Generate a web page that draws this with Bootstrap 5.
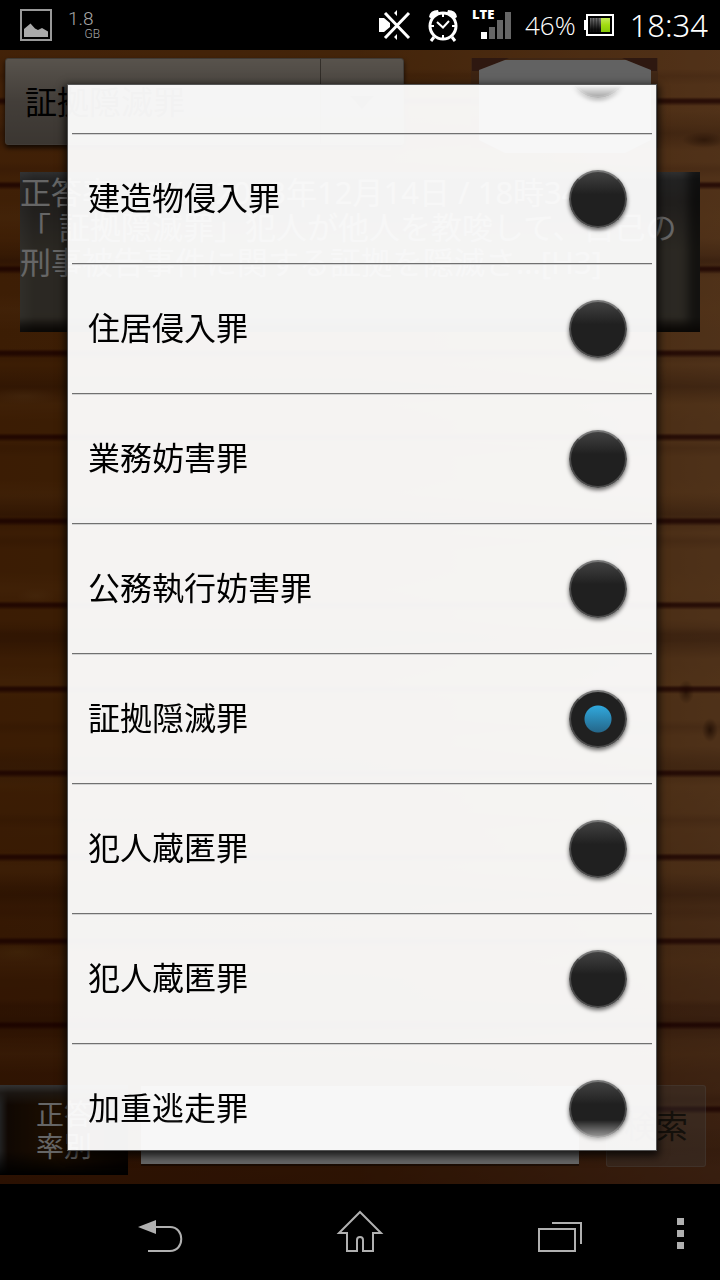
<!DOCTYPE html>
<html lang="ja">
<head>
<meta charset="utf-8">
<meta name="viewport" content="width=device-width, initial-scale=1">
<title>証拠隠滅罪</title>
<link href="https://cdn.jsdelivr.net/npm/bootstrap@5.3.0/dist/css/bootstrap.min.css" rel="stylesheet">
<style>
  body { background: #000; font-family: "Noto Sans", "Noto Sans CJK JP", sans-serif; }
  .status-bar { height: 50px; padding-right: 12px; color: #fff; font-family: "Open Sans", "Noto Sans", sans-serif; font-weight: 300; }
  .storage { width: 32px; color: #a8a8a8; font-family: Roboto, sans-serif; }
  .storage-size { font-size: 19px; line-height: 18px; }
  .storage-unit { font-size: 12px; line-height: 12px; }
  .signal { margin-left: 12px; }
  .battery-level { font-size: 26px; line-height: 32px; }
  .clock { font-size: 31px; line-height: 32px; font-family: "Noto Sans", sans-serif; }

  /* Wooden planks: grooves, knots, grain, base tone */
  .wood {
    background:
      repeating-linear-gradient(180deg, transparent 0 47px, rgba(60,0,0,.7) 50px 52px, transparent 56px 84px),
      radial-gradient(ellipse 34px 8px at 24px 346px, rgba(210,140,70,.25), transparent),
      radial-gradient(ellipse 20px 8px at 36px 546px, rgba(210,140,70,.2), transparent),
      radial-gradient(ellipse 36px 10px at 18px 902px, rgba(190,130,40,.3), transparent),
      radial-gradient(ellipse 8px 12px at calc(100% - 34px) 642px, rgba(60,20,0,.6), transparent),
      radial-gradient(ellipse 8px 12px at calc(100% - 10px) 680px, rgba(60,20,0,.7), transparent),
      radial-gradient(ellipse 22px 8px at calc(100% - 16px) 90px, rgba(60,20,0,.5), transparent),
      repeating-linear-gradient(180deg, transparent 0 19px, rgba(60,10,0,.12) 26px, transparent 35px 57px, rgba(220,140,60,.14) 74px, transparent 93px),
      repeating-linear-gradient(180deg, transparent 0 61px, rgba(50,10,0,.25) 83px, transparent 101px 127px),
      linear-gradient(180deg, rgba(230,130,60,.22), transparent 30% 65%, rgba(50,0,0,.4)),
      linear-gradient(90deg, #94480a, #98500f 50%, #c47c40);
  }
  .spinner-box { flex: 0 1 399px; height: 87px; margin-left: 5px; }
  .spinner-box select {
    appearance: none; height: 87px; padding: 0 19px; border: 1px solid #a09488; border-radius: 3px; color: #000;
    font-size: 32px; box-shadow: 0 3px 5px rgba(0,0,0,.7);
    background: linear-gradient(90deg, transparent 314px, rgba(70,60,50,.6) 314px 315px, transparent 315px), linear-gradient(#dccfbf, #a89c90 50%, #94887c);
  }
  .caret { right: 30px; top: 38px; width: 24px; height: 14px; }
  .question {
    height: 160px; margin: 17px 20px 0; padding-top: 3px; color: #fff; font-size: 31px; line-height: 35px;
    background: linear-gradient(90deg, rgba(255,255,255,.1), transparent 14px), linear-gradient(#777 0, #555 8px, #504b47 30px, #6c6557 80px, #6c6557 145px, #35281c);
    box-shadow: inset -12px -8px 10px rgba(0,0,0,.55);
  }
  .bottom-bar { padding: 0 14px 9px 0; }
  .rate-btn {
    width: 128px; height: 90px; border: 0; color: #fff; font-size: 28px; line-height: 32px; padding: 0;
    background: linear-gradient(#808080 0, rgba(74,64,56,.8) 8px, transparent 20px 66px, #000), linear-gradient(90deg, #555 0, #281408 8px, #502800 50%, #1c0c00);
  }
  .search-box { height: 78px; margin: 1px 0 0 13px; border: 0; border-radius: 0; background: #fff; box-shadow: 0 2px 0 rgba(0,0,0,.4); }
  .search-btn { width: 100px; height: 82px; margin-left: 27px; border: 1px solid rgba(255,255,255,.16); border-radius: 3px; background: rgba(150,150,150,.32); color: #33291d; font-size: 32px; }

  .scrim { background: rgba(0,0,0,.6); padding: 34px 63px 33px 67px; }
  .picker { background: rgba(255,255,255,.95); border: 1px solid #555; box-shadow: 0 3px 8px 2px rgba(0,0,0,.75); padding: 0 4px; }
  .picker-list { height: 0; mask-image: linear-gradient(transparent, #000 32px, #000 calc(100% - 30px), transparent); -webkit-mask-image: linear-gradient(transparent, #000 32px, #000 calc(100% - 30px), transparent); }
  /* list rests partly scrolled */
  .picker-rows { margin-top: -81px; }
  .picker-row { height: 130px; flex: none; padding: 0 25px 0 16px; color: #000; font-size: 32px; line-height: 40px; border-bottom: 1px solid #707070; box-shadow: 0 1px 0 #d2d2d2; }
  .picker-row span { padding-bottom: 1px; }
  .picker-row .form-check-input {
    width: 58px; height: 58px; margin: 0; float: none; flex: none; border: 2px solid #4c4c4c;
    border-top-color: #777;
    background: linear-gradient(#454545, #202020 42%, #202020); background-origin: border-box;
    box-shadow: 0 2px 4px rgba(0,0,0,.6);
  }
  .picker-row .form-check-input:checked {
    background: radial-gradient(circle at 50% 50%, transparent 13px, #202020 14px), linear-gradient(#30a8dc 16px, #25678a 42px);
    background-origin: border-box;
  }
  .nav-keys { height: 96px; }
  .nav-keys button { border: 0; background: none; padding: 0; line-height: 0; }
  .nav-side { padding: 0 16px 0 128px; }
</style>
</head>
<body class="d-flex flex-column min-vh-100">

<header class="status-bar d-flex align-items-center ps-3">
  <svg class="ms-1" width="32" height="32" viewBox="0 0 32 32"><rect x="1" y="1" width="30" height="30" fill="none" stroke="#999" stroke-width="2"/><path d="M4 28V20L10.500 14.500 15 19.500 18 21 22 19 28 22.500V28Z" fill="#aaa"/></svg>
  <div class="storage ms-3 d-flex flex-column">
    <span class="storage-size">1.8</span>
    <span class="storage-unit text-end">GB</span>
  </div>
  <div class="ms-auto d-flex align-items-center">
    <svg width="32" height="32" viewBox="0 0 32 32"><path d="M0 9H5L11 14V18L5 23H0Z M15 4 18 1V7Z M15 28 18 31V25Z" fill="#fff"/><path d="M6 4 30 29M30 4 6 29" stroke="#fff" stroke-width="3" fill="none"/></svg>
    <svg class="ms-3" width="32" height="34" viewBox="0 0 32 34"><circle cx="16" cy="18" r="13" fill="none" stroke="#fff" stroke-width="3"/><path d="M16 6V9M16 27V30M4 18H7M25 18H28M10 14 16 19.500 22 13" stroke="#fff" stroke-width="2" fill="none"/><path d="M2 9Q3 2 11 2L12 5 5 11ZM30 9Q29 2 21 2L20 5 27 11Z" fill="#fff"/><path d="M7 29 4 33M25 29 28 33" stroke="#fff" stroke-width="3"/></svg>
    <svg class="signal" width="42" height="42" viewBox="0 0 42 42"><text x="1" y="15" font-family="Open Sans, sans-serif" font-size="13" font-weight="800" fill="#fff">LTE</text><rect x="10" y="28" width="6" height="7" fill="#fff"/><path d="M18 23H24V35H18ZM26 16H32V35H26ZM34 8H40V35H34Z" fill="#666"/></svg>
    <span class="battery-level ms-2 ps-1">46%</span>
    <svg class="ms-2" width="30" height="22" viewBox="0 0 30 22"><defs><linearGradient id="cell" x2="0" y2="1"><stop stop-color="#c4ea58"/><stop offset=".5" stop-color="#a2dc10"/><stop offset="1" stop-color="#86c808"/></linearGradient><linearGradient id="used" x2="0" y2="1"><stop stop-color="#777"/><stop offset=".8" stop-color="#111"/></linearGradient></defs><rect x="3" y="1" width="26" height="20" fill="none" stroke="#fff" stroke-width="2"/><rect y="6" width="3" height="10" fill="#fff"/><rect x="6" y="4" width="11" height="14" fill="url(#used)"/><rect x="17" y="4" width="9" height="14" fill="url(#cell)"/><path d="M8 4V18M11 4V18M14 4V18" stroke="#000" opacity=".6"/></svg>
    <span class="clock ms-3">18:34</span>
  </div>
</header>

<main class="wood flex-grow-1 d-flex flex-column position-relative">
  <div class="d-flex align-items-start pt-2">
    <div class="spinner-box position-relative">
      <select class="w-100" aria-label="罪名"><option>証拠隠滅罪</option></select>
      <svg class="caret position-absolute" viewBox="0 0 24 14"><path d="M0 0H24L12 13Z" fill="#555"/></svg>
    </div>
    <svg class="ms-auto me-5" width="201" height="97" viewBox="0 0 201 97"><rect width="187" height="90" fill="#8a5838" opacity=".55"/><path d="M1 0H38L8 13H1ZM186 0H151L180 13H186Z" fill="#743c28"/><path d="M8 12 34 2H155L180 12V82L154 95H34L8 82Z" fill="#f4f4f4"/></svg>
  </div>
  <div class="question text-nowrap">正答率：0% / 2013年12月14日 / 18時34分<br>「 証拠隠滅罪」犯人が他人を教唆して、自己の<br>刑事被告事件に関する証拠を隠滅さ...[H3]</div>
  <div class="bottom-bar d-flex align-items-start mt-auto">
    <button class="rate-btn flex-shrink-0" type="button">正答<br>率別</button>
    <input class="search-box flex-grow-1" type="text" aria-label="検索語">
    <button class="search-btn flex-shrink-0 p-0" type="button">検索</button>
  </div>

  <div class="scrim position-absolute top-0 start-0 w-100 h-100 d-flex">
    <div class="picker flex-grow-1 d-flex flex-column" role="dialog" aria-label="罪名">
      <div class="picker-list flex-grow-1 overflow-hidden">
        <div class="picker-rows d-flex flex-column">
          <label class="picker-row d-flex align-items-center justify-content-end"><input class="form-check-input" type="radio" name="crime" aria-label="罪名"></label>
          <label class="picker-row d-flex align-items-center justify-content-between"><span>建造物侵入罪</span><input class="form-check-input" type="radio" name="crime"></label>
          <label class="picker-row d-flex align-items-center justify-content-between"><span>住居侵入罪</span><input class="form-check-input" type="radio" name="crime"></label>
          <label class="picker-row d-flex align-items-center justify-content-between"><span>業務妨害罪</span><input class="form-check-input" type="radio" name="crime"></label>
          <label class="picker-row d-flex align-items-center justify-content-between"><span>公務執行妨害罪</span><input class="form-check-input" type="radio" name="crime"></label>
          <label class="picker-row d-flex align-items-center justify-content-between"><span>証拠隠滅罪</span><input class="form-check-input" type="radio" name="crime" checked></label>
          <label class="picker-row d-flex align-items-center justify-content-between"><span>犯人蔵匿罪</span><input class="form-check-input" type="radio" name="crime"></label>
          <label class="picker-row d-flex align-items-center justify-content-between"><span>犯人蔵匿罪</span><input class="form-check-input" type="radio" name="crime"></label>
          <label class="picker-row d-flex align-items-center justify-content-between"><span>加重逃走罪</span><input class="form-check-input" type="radio" name="crime"></label>
        </div>
      </div>
    </div>
  </div>
</main>

<nav class="nav-keys d-flex align-items-center" aria-label="システム">
  <div class="nav-side flex-grow-1 d-flex justify-content-between">
    <button type="button" aria-label="戻る"><svg width="64" height="48" viewBox="0 0 64 48"><path d="M10 19 28 12V26Z" fill="#b0b0b0"/><path d="M28 19H42C57 19 57 43 42 43H20" fill="none" stroke="#b0b0b0" stroke-width="2"/></svg></button>
    <button type="button" aria-label="ホーム"><svg width="64" height="48" viewBox="0 0 64 48"><path d="M32 4 53 25H45V43H35V32Q35 29 32 29Q29 29 29 32V43H19V25H11Z" fill="none" stroke="#b0b0b0" stroke-width="2"/></svg></button>
    <button type="button" aria-label="最近のアプリ"><svg width="64" height="48" viewBox="0 0 64 48"><path d="M11 21H47V43H11ZM24 15H53V36" fill="none" stroke="#b0b0b0" stroke-width="2"/></svg></button>
  </div>
  <button class="ms-5 me-3" type="button" aria-label="メニュー"><svg width="48" height="48" viewBox="0 0 48 48"><path d="M21 10H28V17H21ZM21 22H28V29H21ZM21 34H28V41H21Z" fill="#b0b0b0"/></svg></button>
</nav>

<script src="https://cdn.jsdelivr.net/npm/bootstrap@5.3.0/dist/js/bootstrap.bundle.min.js"></script>
</body>
</html>
